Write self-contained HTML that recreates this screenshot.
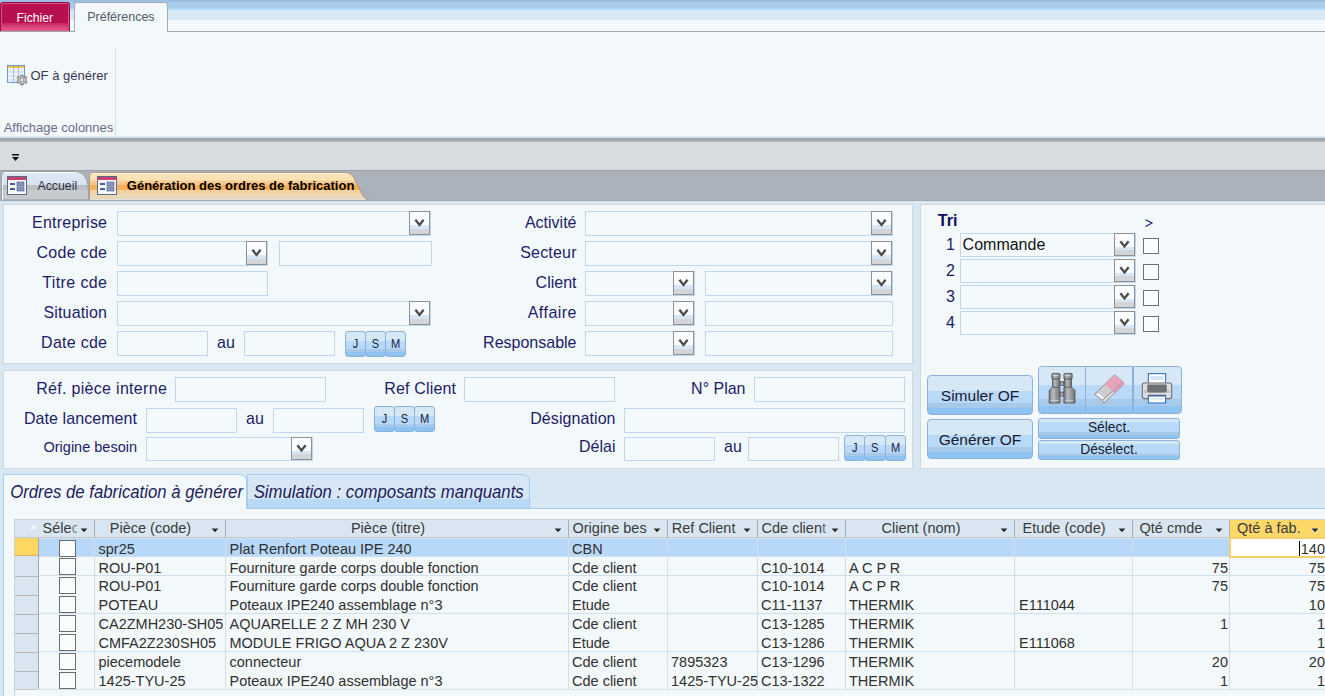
<!DOCTYPE html><html><head><meta charset="utf-8"><style>
*{margin:0;padding:0;box-sizing:content-box}
html,body{width:1325px;height:696px;overflow:hidden;background:#f3f8fb;font-family:"Liberation Sans", sans-serif}
body>div{position:absolute}
.t{position:absolute;white-space:nowrap}
.fld{position:absolute;border:1px solid #bfd8ef;background:#f4f9fc}
.dd{position:absolute;width:19px;border:1px solid #8e9094;background:linear-gradient(#fbfcfd 0,#fbfcfd 60%,#d6e6f4 60%,#d6e6f4 77%,#d3d5d8 77%)}
.btn{position:absolute;border:1px solid #8cb2dc;background:linear-gradient(#d6e7f5 0,#d6e7f5 40%,#b9d9f9 40%,#b9d9f9 70%,#a7c9ea 70%,#a7c9ea 85%,#8fc3f1 85%)}
.pnl{position:absolute;background:#f3f8fb;border:1px solid #d3d7db}
</style></head><body><div style="left:0px;top:0px;width:1325px;height:31px;background:linear-gradient(#9cc0e1 0,#9cc0e1 2px,#a8cce9 2px,#a8cce9 8px,#b4d8f8 8px,#b4d8f8 10px,#d8e8f4 10px,#d8e8f4 20px,#f3f8fb 20px)"></div>
<div style="left:0px;top:31px;width:1325px;height:1px;background:#a4a8ae"></div>
<div style="left:0;top:2px;width:68px;height:28px;background:linear-gradient(#b80f50 0,#b80f50 72%,#c82860 72%,#d84478 86%,#e25a8c 100%);border:1px solid #9c0c44;border-bottom:none;border-radius:3px 3px 0 0;box-shadow:inset 1px 1px 0 #d0507e,inset -1px 0 0 #d0507e"></div>
<div class="t" style="left:16.5px;top:10.76px;font-size:12.2px;line-height:14.02px;color:#ffffff;font-weight:normal;font-style:normal;">Fichier</div>
<div style="left:74px;top:2px;width:92px;height:29px;background:#f3f8fb;border:1px solid #a8acb2;border-bottom:none;border-radius:3px 3px 0 0"></div>
<div class="t" style="left:87.2px;top:10.49px;font-size:12.5px;line-height:14.36px;color:#505a66;font-weight:normal;font-style:normal;">Préférences</div>
<div style="left:0px;top:32px;width:1325px;height:105px;background:#f3f8fb"></div>
<div style="left:115px;top:48px;width:1px;height:89px;background:#d4dde6"></div>
<svg style="position:absolute;left:6px;top:64px" width="22" height="22">
<rect x="1.5" y="1.5" width="17" height="17" fill="#eef4fb" stroke="#6e9ccc"/>
<rect x="2" y="2" width="16" height="2" fill="#f0c040"/>
<line x1="7.5" y1="2" x2="7.5" y2="18" stroke="#9cb8d8"/><line x1="12.5" y1="2" x2="12.5" y2="18" stroke="#9cb8d8"/>
<line x1="2" y1="8" x2="18" y2="8" stroke="#c8d8ea"/><line x1="2" y1="12" x2="18" y2="12" stroke="#c8d8ea"/><line x1="2" y1="16" x2="18" y2="16" stroke="#c8d8ea"/>
<g transform="translate(16 16)"><path d="M-1 -4.8 L1 -4.8 L1.3 -3.3 L2.6 -2.7 L3.9 -3.6 L4.9 -2.2 L3.8 -1 L4 0.7 L5 1.8 L4 3.3 L2.7 2.8 L1.3 3.6 L1 4.9 L-1 4.9 L-1.3 3.6 L-2.7 2.8 L-4 3.3 L-5 1.8 L-4 0.7 L-3.8 -1 L-4.9 -2.2 L-3.9 -3.6 L-2.6 -2.7 L-1.3 -3.3 Z" fill="#c4c4c4" stroke="#6a6a6a" stroke-width="0.9"/><circle r="1.7" fill="#f6f6f6" stroke="#7a7a7a" stroke-width="0.7"/></g>
</svg>
<div class="t" style="left:30.5px;top:69.03px;font-size:13px;line-height:14.94px;color:#3a3658;font-weight:normal;font-style:normal;">OF à générer</div>
<div class="t" style="left:3.7px;top:121.23px;font-size:13px;line-height:14.94px;color:#6c6a8a;font-weight:normal;font-style:normal;">Affichage colonnes</div>
<div style="left:0px;top:136px;width:1325px;height:2px;background:#d4e4f2"></div>
<div style="left:0px;top:138px;width:1325px;height:4px;background:linear-gradient(#9ca0a6,#b4b8bc)"></div>
<div style="left:0px;top:142px;width:1325px;height:28px;background:#d8dbdf"></div>
<div style="left:0px;top:142px;width:1325px;height:1px;background:#d2deea"></div>
<svg style="position:absolute;left:11px;top:153px" width="10" height="10"><rect x="1" y="1" width="7" height="1.5" fill="#111"/><path d="M1 4 L8 4 L4.5 8 Z" fill="#111"/></svg>
<div style="left:0px;top:170px;width:1325px;height:1px;background:#9ca0a6"></div>
<div style="left:0px;top:171px;width:1325px;height:29px;background:#abb2bb"></div>
<svg style="position:absolute;left:0;top:170px" width="92" height="31">
<defs><linearGradient id="ag" x1="0" y1="0" x2="0" y2="1">
<stop offset="0" stop-color="#ffffff"/><stop offset="0.07" stop-color="#ffffff"/><stop offset="0.07" stop-color="#dce8f4"/><stop offset="0.48" stop-color="#d6e4f0"/><stop offset="0.48" stop-color="#bcc0c4"/><stop offset="0.64" stop-color="#bcc0c4"/><stop offset="0.64" stop-color="#c8cbcf"/><stop offset="1" stop-color="#c6c9cd"/></linearGradient></defs>
<path d="M1.5 30 L1.5 6 Q1.5 1.5 6 1.5 L75 1.5 Q86 2 88 15 L89 30 Z" fill="url(#ag)" stroke="#9aa0a6" stroke-width="1"/>
<path d="M2.5 30 L2.5 7" stroke="#f4f6f8" stroke-width="1"/>
</svg>
<svg style="position:absolute;left:88px;top:171px" width="285" height="30">
<defs><linearGradient id="og" x1="0" y1="0" x2="0" y2="1">
<stop offset="0" stop-color="#fffaf0"/><stop offset="0.07" stop-color="#fffaf0"/><stop offset="0.07" stop-color="#fbe4b8"/><stop offset="0.28" stop-color="#fbe0b2"/><stop offset="0.30" stop-color="#f8cc94"/><stop offset="0.44" stop-color="#f8c488"/><stop offset="0.46" stop-color="#f7b055"/><stop offset="0.62" stop-color="#f7b258"/><stop offset="0.64" stop-color="#f6d09c"/><stop offset="0.76" stop-color="#f2d4a8"/><stop offset="0.78" stop-color="#ecd8b4"/><stop offset="0.93" stop-color="#e8d8b8"/><stop offset="0.94" stop-color="#e0e2e2"/><stop offset="1" stop-color="#e0e2e2"/></linearGradient></defs>
<path d="M1.5 29.5 L1.5 5 Q1.5 1.5 5 1.5 L257 1.5 Q263 1.5 266 7 L274 23 Q277 29 283 29.5 Z" fill="url(#og)" stroke="#b09878" stroke-width="1"/>
</svg>
<svg style="position:absolute;left:7px;top:176px" width="20" height="19">
<rect x="0.5" y="0.5" width="19" height="18" fill="#f6f8fc" stroke="#5a6a8a"/>
<rect x="1" y="1" width="18" height="3" fill="#c84070"/>
<rect x="3" y="7" width="5" height="2" fill="#4a5a9a"/><rect x="3" y="12" width="5" height="2" fill="#4a5a9a"/>
<rect x="10" y="6" width="7" height="4" fill="#8898c0" stroke="#4a5a8a" stroke-width="0.6"/><rect x="10" y="11" width="7" height="4" fill="#8898c0" stroke="#4a5a8a" stroke-width="0.6"/>
</svg>
<div class="t" style="left:37.5px;top:179.37px;font-size:12.3px;line-height:14.13px;color:#303048;font-weight:normal;font-style:normal;">Accueil</div>
<svg style="position:absolute;left:97px;top:176px" width="20" height="19">
<rect x="0.5" y="0.5" width="19" height="18" fill="#f6f8fc" stroke="#5a6a8a"/>
<rect x="1" y="1" width="18" height="3" fill="#c84070"/>
<rect x="3" y="7" width="5" height="2" fill="#4a5a9a"/><rect x="3" y="12" width="5" height="2" fill="#4a5a9a"/>
<rect x="10" y="6" width="7" height="4" fill="#8898c0" stroke="#4a5a8a" stroke-width="0.6"/><rect x="10" y="11" width="7" height="4" fill="#8898c0" stroke="#4a5a8a" stroke-width="0.6"/>
</svg>
<div class="t" style="left:126.8px;top:178.74px;font-size:13px;line-height:14.94px;color:#000000;font-weight:bold;font-style:normal;">Génération des ordres de fabrication</div>
<div style="left:0px;top:200px;width:1325px;height:496px;background:#d7e7f4"></div>
<div style="left:0px;top:200px;width:1325px;height:1px;background:#a2a8ae"></div>
<div class="pnl" style="left:3px;top:204px;width:908px;height:158px"></div>
<div class="pnl" style="left:3px;top:370px;width:908px;height:97px"></div>
<div class="pnl" style="left:920px;top:204px;width:410px;height:263px"></div>
<div class="t" style="right:1217.7777777777778px;top:213.52px;font-size:16px;line-height:18.38px;color:#1c1c66;font-weight:normal;font-style:normal;letter-spacing:0.222px;transform:scaleY(1.05);transform-origin:0 14.74px;">Entreprise</div>
<div class="t" style="right:1217.7px;top:243.52px;font-size:16px;line-height:18.38px;color:#1c1c66;font-weight:normal;font-style:normal;letter-spacing:0.300px;transform:scaleY(1.05);transform-origin:0 14.74px;">Code cde</div>
<div class="t" style="right:1217.6125px;top:273.52px;font-size:16px;line-height:18.38px;color:#1c1c66;font-weight:normal;font-style:normal;letter-spacing:0.388px;transform:scaleY(1.05);transform-origin:0 14.74px;">Titre cde</div>
<div class="t" style="right:1217.8375px;top:303.52px;font-size:16px;line-height:18.38px;color:#1c1c66;font-weight:normal;font-style:normal;letter-spacing:0.163px;transform:scaleY(1.05);transform-origin:0 14.74px;">Situation</div>
<div class="t" style="right:1217.7285714285715px;top:333.52px;font-size:16px;line-height:18.38px;color:#1c1c66;font-weight:normal;font-style:normal;letter-spacing:0.271px;transform:scaleY(1.05);transform-origin:0 14.74px;">Date cde</div>
<div class="fld" style="left:117px;top:211px;width:312px;height:23px"></div>
<div class="dd" style="left:409px;top:211px;height:22px"><svg width="19" height="22" style="position:absolute;left:0;top:0"><path d="M5.4 7.8 L9.5 12.9 L13.6 7.8" fill="none" stroke="#4c4c4c" stroke-width="2.4" stroke-linejoin="miter"/></svg></div>
<div class="fld" style="left:117px;top:241px;width:149px;height:23px"></div>
<div class="dd" style="left:246px;top:241px;height:22px"><svg width="19" height="22" style="position:absolute;left:0;top:0"><path d="M5.4 7.8 L9.5 12.9 L13.6 7.8" fill="none" stroke="#4c4c4c" stroke-width="2.4" stroke-linejoin="miter"/></svg></div>
<div class="fld" style="left:279px;top:241px;width:151px;height:23px"></div>
<div class="fld" style="left:117px;top:271px;width:149px;height:23px"></div>
<div class="fld" style="left:117px;top:301px;width:312px;height:23px"></div>
<div class="dd" style="left:409px;top:301px;height:22px"><svg width="19" height="22" style="position:absolute;left:0;top:0"><path d="M5.4 7.8 L9.5 12.9 L13.6 7.8" fill="none" stroke="#4c4c4c" stroke-width="2.4" stroke-linejoin="miter"/></svg></div>
<div class="fld" style="left:117px;top:331px;width:89px;height:23px"></div>
<div class="t" style="left:217px;top:333.52px;font-size:16px;line-height:18.38px;color:#1c1c66;font-weight:normal;font-style:normal;transform:scaleY(1.05);transform-origin:0 14.74px;">au</div>
<div class="fld" style="left:244px;top:331px;width:89px;height:23px"></div>
<div class="btn" style="left:345px;top:331px;width:19px;height:24px;border-radius:3px;background:linear-gradient(#d6e7f5 0,#d6e7f5 36%,#b9d9f9 36%,#b9d9f9 70%,#a7c9ea 70%,#a7c9ea 84%,#8fc3f1 84%);"><span style="position:absolute;left:0;right:0;top:3.6px;text-align:center;font-size:13px;line-height:15px;color:#1c1c40;transform:scaleX(0.85)">J</span></div>
<div class="btn" style="left:365px;top:331px;width:19px;height:24px;border-radius:3px;background:linear-gradient(#d6e7f5 0,#d6e7f5 36%,#b9d9f9 36%,#b9d9f9 70%,#a7c9ea 70%,#a7c9ea 84%,#8fc3f1 84%);"><span style="position:absolute;left:0;right:0;top:3.6px;text-align:center;font-size:13px;line-height:15px;color:#1c1c40;transform:scaleX(0.85)">S</span></div>
<div class="btn" style="left:385px;top:331px;width:19px;height:24px;border-radius:3px;background:linear-gradient(#d6e7f5 0,#d6e7f5 36%,#b9d9f9 36%,#b9d9f9 70%,#a7c9ea 70%,#a7c9ea 84%,#8fc3f1 84%);"><span style="position:absolute;left:0;right:0;top:3.6px;text-align:center;font-size:13px;line-height:15px;color:#1c1c40;transform:scaleX(0.85)">M</span></div>
<div class="t" style="right:748.5px;top:213.52px;font-size:16px;line-height:18.38px;color:#1c1c66;font-weight:normal;font-style:normal;transform:scaleY(1.05);transform-origin:0 14.74px;">Activité</div>
<div class="t" style="right:748.3px;top:243.52px;font-size:16px;line-height:18.38px;color:#1c1c66;font-weight:normal;font-style:normal;letter-spacing:0.200px;transform:scaleY(1.05);transform-origin:0 14.74px;">Secteur</div>
<div class="t" style="right:748.5px;top:273.52px;font-size:16px;line-height:18.38px;color:#1c1c66;font-weight:normal;font-style:normal;transform:scaleY(1.05);transform-origin:0 14.74px;">Client</div>
<div class="t" style="right:748.0333333333333px;top:303.52px;font-size:16px;line-height:18.38px;color:#1c1c66;font-weight:normal;font-style:normal;letter-spacing:0.467px;transform:scaleY(1.05);transform-origin:0 14.74px;">Affaire</div>
<div class="t" style="right:748.5px;top:333.52px;font-size:16px;line-height:18.38px;color:#1c1c66;font-weight:normal;font-style:normal;transform:scaleY(1.05);transform-origin:0 14.74px;">Responsable</div>
<div class="fld" style="left:585px;top:211px;width:306px;height:23px"></div>
<div class="dd" style="left:871px;top:211px;height:22px"><svg width="19" height="22" style="position:absolute;left:0;top:0"><path d="M5.4 7.8 L9.5 12.9 L13.6 7.8" fill="none" stroke="#4c4c4c" stroke-width="2.4" stroke-linejoin="miter"/></svg></div>
<div class="fld" style="left:585px;top:241px;width:306px;height:23px"></div>
<div class="dd" style="left:871px;top:241px;height:22px"><svg width="19" height="22" style="position:absolute;left:0;top:0"><path d="M5.4 7.8 L9.5 12.9 L13.6 7.8" fill="none" stroke="#4c4c4c" stroke-width="2.4" stroke-linejoin="miter"/></svg></div>
<div class="fld" style="left:585px;top:271px;width:108px;height:23px"></div>
<div class="dd" style="left:673px;top:271px;height:22px"><svg width="19" height="22" style="position:absolute;left:0;top:0"><path d="M5.4 7.8 L9.5 12.9 L13.6 7.8" fill="none" stroke="#4c4c4c" stroke-width="2.4" stroke-linejoin="miter"/></svg></div>
<div class="fld" style="left:705px;top:271px;width:186px;height:23px"></div>
<div class="dd" style="left:871px;top:271px;height:22px"><svg width="19" height="22" style="position:absolute;left:0;top:0"><path d="M5.4 7.8 L9.5 12.9 L13.6 7.8" fill="none" stroke="#4c4c4c" stroke-width="2.4" stroke-linejoin="miter"/></svg></div>
<div class="fld" style="left:585px;top:301px;width:108px;height:23px"></div>
<div class="dd" style="left:673px;top:301px;height:22px"><svg width="19" height="22" style="position:absolute;left:0;top:0"><path d="M5.4 7.8 L9.5 12.9 L13.6 7.8" fill="none" stroke="#4c4c4c" stroke-width="2.4" stroke-linejoin="miter"/></svg></div>
<div class="fld" style="left:705px;top:301px;width:186px;height:23px"></div>
<div class="fld" style="left:585px;top:331px;width:108px;height:23px"></div>
<div class="dd" style="left:673px;top:331px;height:22px"><svg width="19" height="22" style="position:absolute;left:0;top:0"><path d="M5.4 7.8 L9.5 12.9 L13.6 7.8" fill="none" stroke="#4c4c4c" stroke-width="2.4" stroke-linejoin="miter"/></svg></div>
<div class="fld" style="left:705px;top:331px;width:186px;height:23px"></div>
<div class="t" style="right:1157.8899999999999px;top:380.22px;font-size:16px;line-height:18.38px;color:#1c1c66;font-weight:normal;font-style:normal;letter-spacing:0.310px;transform:scaleY(1.05);transform-origin:0 14.74px;">Réf. pièce interne</div>
<div class="fld" style="left:175px;top:377px;width:149px;height:23px"></div>
<div class="t" style="right:1187.923076923077px;top:409.92px;font-size:16px;line-height:18.38px;color:#1c1c66;font-weight:normal;font-style:normal;letter-spacing:0.077px;transform:scaleY(1.05);transform-origin:0 14.74px;">Date lancement</div>
<div class="fld" style="left:146px;top:408px;width:89px;height:23px"></div>
<div class="t" style="left:246px;top:409.92px;font-size:16px;line-height:18.38px;color:#1c1c66;font-weight:normal;font-style:normal;transform:scaleY(1.05);transform-origin:0 14.74px;">au</div>
<div class="fld" style="left:273px;top:408px;width:89px;height:23px"></div>
<div class="btn" style="left:374px;top:406px;width:19px;height:24px;border-radius:3px;background:linear-gradient(#d6e7f5 0,#d6e7f5 36%,#b9d9f9 36%,#b9d9f9 70%,#a7c9ea 70%,#a7c9ea 84%,#8fc3f1 84%);"><span style="position:absolute;left:0;right:0;top:3.6px;text-align:center;font-size:13px;line-height:15px;color:#1c1c40;transform:scaleX(0.85)">J</span></div>
<div class="btn" style="left:394px;top:406px;width:19px;height:24px;border-radius:3px;background:linear-gradient(#d6e7f5 0,#d6e7f5 36%,#b9d9f9 36%,#b9d9f9 70%,#a7c9ea 70%,#a7c9ea 84%,#8fc3f1 84%);"><span style="position:absolute;left:0;right:0;top:3.6px;text-align:center;font-size:13px;line-height:15px;color:#1c1c40;transform:scaleX(0.85)">S</span></div>
<div class="btn" style="left:414px;top:406px;width:19px;height:24px;border-radius:3px;background:linear-gradient(#d6e7f5 0,#d6e7f5 36%,#b9d9f9 36%,#b9d9f9 70%,#a7c9ea 70%,#a7c9ea 84%,#8fc3f1 84%);"><span style="position:absolute;left:0;right:0;top:3.6px;text-align:center;font-size:13px;line-height:15px;color:#1c1c40;transform:scaleX(0.85)">M</span></div>
<div class="t" style="right:1188px;top:439.48px;font-size:14.5px;line-height:16.66px;color:#1c1c66;font-weight:normal;font-style:normal;">Origine besoin</div>
<div class="fld" style="left:146px;top:437px;width:165px;height:22px"></div>
<div class="dd" style="left:291px;top:437px;height:21px"><svg width="19" height="21" style="position:absolute;left:0;top:0"><path d="M5.4 7.3 L9.5 12.4 L13.6 7.3" fill="none" stroke="#4c4c4c" stroke-width="2.4" stroke-linejoin="miter"/></svg></div>
<div class="t" style="right:868.8222222222222px;top:380.22px;font-size:16px;line-height:18.38px;color:#1c1c66;font-weight:normal;font-style:normal;letter-spacing:0.178px;transform:scaleY(1.05);transform-origin:0 14.74px;">Ref Client</div>
<div class="fld" style="left:464px;top:377px;width:149px;height:23px"></div>
<div class="t" style="right:579.5px;top:380.22px;font-size:16px;line-height:18.38px;color:#1c1c66;font-weight:normal;font-style:normal;transform:scaleY(1.05);transform-origin:0 14.74px;">N° Plan</div>
<div class="fld" style="left:754px;top:377px;width:149px;height:23px"></div>
<div class="t" style="right:709.42px;top:409.92px;font-size:16px;line-height:18.38px;color:#1c1c66;font-weight:normal;font-style:normal;letter-spacing:0.080px;transform:scaleY(1.05);transform-origin:0 14.74px;">Désignation</div>
<div class="fld" style="left:624px;top:408px;width:279px;height:23px"></div>
<div class="t" style="right:709.5px;top:438.12px;font-size:16px;line-height:18.38px;color:#1c1c66;font-weight:normal;font-style:normal;transform:scaleY(1.05);transform-origin:0 14.74px;">Délai</div>
<div class="fld" style="left:624px;top:437px;width:89px;height:22px"></div>
<div class="t" style="left:724px;top:438.12px;font-size:16px;line-height:18.38px;color:#1c1c66;font-weight:normal;font-style:normal;transform:scaleY(1.05);transform-origin:0 14.74px;">au</div>
<div class="fld" style="left:748px;top:437px;width:89px;height:22px"></div>
<div class="btn" style="left:844.0px;top:435px;width:19.3px;height:24px;border-radius:3px;background:linear-gradient(#d6e7f5 0,#d6e7f5 36%,#b9d9f9 36%,#b9d9f9 70%,#a7c9ea 70%,#a7c9ea 84%,#8fc3f1 84%);"><span style="position:absolute;left:0;right:0;top:3.6px;text-align:center;font-size:13px;line-height:15px;color:#1c1c40;transform:scaleX(0.85)">J</span></div>
<div class="btn" style="left:864.3px;top:435px;width:19.3px;height:24px;border-radius:3px;background:linear-gradient(#d6e7f5 0,#d6e7f5 36%,#b9d9f9 36%,#b9d9f9 70%,#a7c9ea 70%,#a7c9ea 84%,#8fc3f1 84%);"><span style="position:absolute;left:0;right:0;top:3.6px;text-align:center;font-size:13px;line-height:15px;color:#1c1c40;transform:scaleX(0.85)">S</span></div>
<div class="btn" style="left:884.6px;top:435px;width:19.3px;height:24px;border-radius:3px;background:linear-gradient(#d6e7f5 0,#d6e7f5 36%,#b9d9f9 36%,#b9d9f9 70%,#a7c9ea 70%,#a7c9ea 84%,#8fc3f1 84%);"><span style="position:absolute;left:0;right:0;top:3.6px;text-align:center;font-size:13px;line-height:15px;color:#1c1c40;transform:scaleX(0.85)">M</span></div>
<div class="t" style="left:937.8px;top:211.82px;font-size:16px;line-height:18.38px;color:#0c0c60;font-weight:bold;font-style:normal;">Tri</div>
<svg style="position:absolute;left:1144px;top:218px" width="10" height="10"><path d="M1.5 1.8 L8 5.1 L1.5 8.4" fill="none" stroke="#1c1c80" stroke-width="1.1"/></svg>
<div class="t" style="right:370px;top:235.52px;font-size:16px;line-height:18.38px;color:#1c1c66;font-weight:normal;font-style:normal;transform:scaleY(1.05);transform-origin:0 14.74px;">1</div>
<div class="fld" style="left:960px;top:233px;width:174px;height:22px"><span style="position:absolute;left:1.6px;top:1.8px;font-size:16px;color:#141414;white-space:nowrap">Commande</span></div>
<div class="dd" style="left:1114px;top:233px;height:21px"><svg width="19" height="21" style="position:absolute;left:0;top:0"><path d="M5.4 7.3 L9.5 12.4 L13.6 7.3" fill="none" stroke="#4c4c4c" stroke-width="2.4" stroke-linejoin="miter"/></svg></div>
<div style="left:1143px;top:238px;width:14px;height:14px;border:1px solid #707070;background:#fbfcfd"></div>
<div class="t" style="right:370px;top:261.52px;font-size:16px;line-height:18.38px;color:#1c1c66;font-weight:normal;font-style:normal;transform:scaleY(1.05);transform-origin:0 14.74px;">2</div>
<div class="fld" style="left:960px;top:259px;width:174px;height:22px"></div>
<div class="dd" style="left:1114px;top:259px;height:21px"><svg width="19" height="21" style="position:absolute;left:0;top:0"><path d="M5.4 7.3 L9.5 12.4 L13.6 7.3" fill="none" stroke="#4c4c4c" stroke-width="2.4" stroke-linejoin="miter"/></svg></div>
<div style="left:1143px;top:264px;width:14px;height:14px;border:1px solid #707070;background:#fbfcfd"></div>
<div class="t" style="right:370px;top:287.52px;font-size:16px;line-height:18.38px;color:#1c1c66;font-weight:normal;font-style:normal;transform:scaleY(1.05);transform-origin:0 14.74px;">3</div>
<div class="fld" style="left:960px;top:285px;width:174px;height:22px"></div>
<div class="dd" style="left:1114px;top:285px;height:21px"><svg width="19" height="21" style="position:absolute;left:0;top:0"><path d="M5.4 7.3 L9.5 12.4 L13.6 7.3" fill="none" stroke="#4c4c4c" stroke-width="2.4" stroke-linejoin="miter"/></svg></div>
<div style="left:1143px;top:290px;width:14px;height:14px;border:1px solid #707070;background:#fbfcfd"></div>
<div class="t" style="right:370px;top:313.52px;font-size:16px;line-height:18.38px;color:#1c1c66;font-weight:normal;font-style:normal;transform:scaleY(1.05);transform-origin:0 14.74px;">4</div>
<div class="fld" style="left:960px;top:311px;width:174px;height:22px"></div>
<div class="dd" style="left:1114px;top:311px;height:21px"><svg width="19" height="21" style="position:absolute;left:0;top:0"><path d="M5.4 7.3 L9.5 12.4 L13.6 7.3" fill="none" stroke="#4c4c4c" stroke-width="2.4" stroke-linejoin="miter"/></svg></div>
<div style="left:1143px;top:316px;width:14px;height:14px;border:1px solid #707070;background:#fbfcfd"></div>
<div class="btn" style="left:927px;top:375px;width:104px;height:38px;border-radius:4px"><span style="position:absolute;left:0;right:0;top:10.7px;text-align:center;font-size:15.5px;color:#1a1a30">Simuler OF</span></div>
<div class="btn" style="left:927px;top:419px;width:104px;height:38px;border-radius:4px"><span style="position:absolute;left:0;right:0;top:10.7px;text-align:center;font-size:15.5px;color:#1a1a30">Générer OF</span></div>
<div class="btn" style="left:1038px;top:366px;width:46px;height:46px;border-radius:4px 0 0 4px"></div>
<div class="btn" style="left:1085px;top:366px;width:46px;height:46px"></div>
<div class="btn" style="left:1133px;top:366px;width:47px;height:46px;border-radius:0 4px 4px 0"></div>
<div class="btn" style="left:1038px;top:418px;width:140px;height:19px;border-radius:3px;background:linear-gradient(#d6e7f5 0,#d6e7f5 18%,#b9d9f9 18%,#b9d9f9 70%,#a7c9ea 70%,#a7c9ea 84%,#8fc3f1 84%)"><span style="position:absolute;left:0;right:0;top:1.2px;text-align:center;font-size:13.8px;color:#1a1a30">Sélect.</span></div>
<div class="btn" style="left:1038px;top:440px;width:140px;height:18px;border-radius:3px;background:linear-gradient(#d6e7f5 0,#d6e7f5 18%,#b9d9f9 18%,#b9d9f9 70%,#a7c9ea 70%,#a7c9ea 84%,#8fc3f1 84%)"><span style="position:absolute;left:0;right:0;top:0.6px;text-align:center;font-size:13.8px;color:#1a1a30">Désélect.</span></div>
<svg style="position:absolute;left:1044px;top:370px" width="36" height="36">
<defs><linearGradient id="bg1" x1="0" y1="0" x2="1" y2="0"><stop offset="0" stop-color="#727478"/><stop offset="0.35" stop-color="#babcc0"/><stop offset="0.6" stop-color="#9c9ea2"/><stop offset="1" stop-color="#6e7074"/></linearGradient></defs>
<g fill="url(#bg1)" stroke="#5a5c60" stroke-width="0.9" stroke-linejoin="round">
<rect x="16" y="11.6" width="4" height="3.9"/><rect x="16" y="22.2" width="4" height="3.9"/>
<rect x="7.8" y="3.4" width="8.2" height="5.6" rx="1"/><rect x="19.9" y="3.4" width="8.3" height="5.6" rx="1"/>
<rect x="8.5" y="9" width="7" height="8.5"/><rect x="20.5" y="9" width="7" height="8.5"/>
<path d="M5.2 20.5 L8.2 17.3 L15.9 17.3 L15.9 33.1 L5.2 33.1 Z"/>
<path d="M19.9 17.3 L27.8 17.3 L31 20.5 L31 33.1 L19.9 33.1 Z"/>
</g>
<g fill="#c8cacc"><rect x="8.5" y="5" width="6" height="1"/><rect x="20.5" y="5" width="6" height="1"/><rect x="6.5" y="30" width="8" height="1"/><rect x="21" y="30" width="8" height="1"/></g>
</svg>
<svg style="position:absolute;left:1090px;top:370px" width="38" height="36">
<path d="M32.5 11.5 L33.8 14.2 L13.8 33.2 L12.5 30.5 Z" fill="#e4e4e6" stroke="#909094" stroke-width="1" stroke-linejoin="round"/>
<path d="M32.5 11.5 L33.8 14.2 L23.8 23.7 L22.5 21 Z" fill="#e29ab4"/>
<path d="M24.5 4.8 L32.5 11.5 L12.5 30.5 L4.5 24.3 Z" fill="#cdcdcf" stroke="#909094" stroke-width="1" stroke-linejoin="round"/>
<path d="M24.5 4.8 L32.5 11.5 L22.5 21 L14.5 14.5 Z" fill="#e8a4bc"/>
<path d="M6 24.5 L12.5 29.5 L14 28 L8 23 Z" fill="#f4f6f8"/>
</svg>
<svg style="position:absolute;left:1138px;top:370px" width="38" height="36">
<rect x="10.4" y="3.6" width="17.2" height="11" fill="#fbfdff" stroke="#3a74c0" stroke-width="1.1"/>
<rect x="12.5" y="6" width="13" height="4" fill="#d4e6f6"/>
<rect x="4.3" y="13" width="29.4" height="15.6" rx="2" fill="#dcdcde" stroke="#6e7074" stroke-width="1.1"/>
<rect x="6" y="20" width="26" height="3" fill="#c4c4c6"/>
<path d="M9.3 14.5 L28.7 14.5 L28.7 20.5 Q28.7 22.5 26.7 22.5 L11.3 22.5 Q9.3 22.5 9.3 20.5 Z" fill="#6c7074"/>
<rect x="10" y="24.8" width="18" height="1.2" fill="#505256"/>
<rect x="10.4" y="26" width="17.2" height="7" fill="#fbfdff" stroke="#3a74c0" stroke-width="1.1"/>
<rect x="12.5" y="28" width="13" height="1.5" fill="#d4e6f6"/>
</svg>
<div style="left:3px;top:474px;width:242px;height:40px;background:#f3f8fb;border:1px solid #a9cdf0;border-bottom:none;border-radius:0 7px 0 0"></div>
<div style="left:247px;top:474px;width:281px;height:33px;background:linear-gradient(#d6e6f4 0,#d6e6f4 74%,#b9d9f8 74%);border:1px solid #a9cdf0;border-radius:0 7px 0 0"></div>
<div style="left:3px;top:508px;width:1330px;height:200px;background:#f3f8fb;border-left:1px solid #a9cdf0;border-top:1px solid #a9cdf0"></div>
<div style="left:4px;top:508px;width:242px;height:2px;background:#f3f8fb"></div>
<div class="t" style="left:10.2px;top:483.04px;font-size:16.75px;line-height:19.25px;color:#1c1c5a;font-weight:normal;font-style:italic;transform:scaleY(1.05);transform-origin:0 15.4px">Ordres de fabrication à générer</div>
<div class="t" style="left:253.7px;top:483.04px;font-size:16.75px;line-height:19.25px;color:#1c1c5a;font-weight:normal;font-style:italic;transform:scaleY(1.05);transform-origin:0 15.4px">Simulation : composants manquants</div>
<div style="left:14px;top:519px;width:1311px;height:1px;background:#cdd1d5"></div>
<div style="left:14px;top:519px;width:1px;height:19px;background:#cdd1d5"></div>
<div style="left:15px;top:520px;width:1310px;height:17px;background:#d9e6f2"></div>
<div style="left:14px;top:537px;width:1311px;height:1px;background:#c6cacf"></div>
<div style="left:1229px;top:520px;width:96px;height:17px;background:#fcd76a"></div>
<div style="left:94px;top:520px;width:1px;height:18px;background:#a9aeb5"></div>
<div style="left:225px;top:520px;width:1px;height:18px;background:#a9aeb5"></div>
<div style="left:568px;top:520px;width:1px;height:18px;background:#a9aeb5"></div>
<div style="left:667px;top:520px;width:1px;height:18px;background:#a9aeb5"></div>
<div style="left:757px;top:520px;width:1px;height:18px;background:#a9aeb5"></div>
<div style="left:845px;top:520px;width:1px;height:18px;background:#a9aeb5"></div>
<div style="left:1014px;top:520px;width:1px;height:18px;background:#a9aeb5"></div>
<div style="left:1132px;top:520px;width:1px;height:18px;background:#a9aeb5"></div>
<div style="left:1229px;top:520px;width:1px;height:18px;background:#a9aeb5"></div>
<div style="left:14px;top:538px;width:24px;height:151px;background:#d9e6f2"></div>
<div style="left:14px;top:538px;width:24px;height:18px;background:#fcd862"></div>
<div style="left:14px;top:555px;width:24px;height:1px;background:#e0b060"></div>
<div style="left:14px;top:576px;width:24px;height:1px;background:#b4b6b9"></div>
<div style="left:14px;top:595px;width:24px;height:1px;background:#b4b6b9"></div>
<div style="left:14px;top:614px;width:24px;height:1px;background:#b4b6b9"></div>
<div style="left:14px;top:633px;width:24px;height:1px;background:#b4b6b9"></div>
<div style="left:14px;top:652px;width:24px;height:1px;background:#b4b6b9"></div>
<div style="left:14px;top:671px;width:24px;height:1px;background:#b4b6b9"></div>
<div style="left:14px;top:689px;width:24px;height:1px;background:#c4c6c9"></div>
<div style="left:14px;top:538px;width:1px;height:158px;background:#cdd1d5"></div>
<div style="left:38px;top:538px;width:1px;height:151px;background:#a6aaae"></div>
<div style="left:39px;top:538px;width:1190px;height:18px;background:#b7d8f8"></div>
<div style="left:39px;top:538px;width:1286px;height:1px;background:#d0e0ee"></div>
<div style="left:39px;top:556px;width:1286px;height:1px;background:#d0e0ee"></div>
<div style="left:39px;top:575px;width:1286px;height:1px;background:#d0e0ee"></div>
<div style="left:39px;top:613px;width:1286px;height:1px;background:#d0e0ee"></div>
<div style="left:39px;top:651px;width:1286px;height:1px;background:#d0e0ee"></div>
<div style="left:39px;top:689px;width:1286px;height:1px;background:#d0e0ee"></div>
<div style="left:94px;top:538px;width:1px;height:151px;background:#d3dde6"></div>
<div style="left:225px;top:538px;width:1px;height:151px;background:#d3dde6"></div>
<div style="left:568px;top:538px;width:1px;height:151px;background:#d3dde6"></div>
<div style="left:667px;top:538px;width:1px;height:151px;background:#d3dde6"></div>
<div style="left:757px;top:538px;width:1px;height:151px;background:#d3dde6"></div>
<div style="left:845px;top:538px;width:1px;height:151px;background:#d3dde6"></div>
<div style="left:1014px;top:538px;width:1px;height:151px;background:#d3dde6"></div>
<div style="left:1132px;top:538px;width:1px;height:151px;background:#d3dde6"></div>
<div style="left:1229px;top:538px;width:1px;height:151px;background:#d3dde6"></div>
<div style="left:1229px;top:537px;width:94px;height:17px;background:#ffffff;border:2px solid #f6cf6c;border-right:none"></div>
<div style="left:1299px;top:541px;width:1px;height:15px;background:#000"></div>
<div class="t" style="left:42.6px;top:520.38px;font-size:14.5px;line-height:16.66px;color:#3a3a3a;font-weight:normal;font-style:normal;width:34px;overflow:hidden;transform:scaleY(1.06);transform-origin:0 13.3px;">Séle<span style="opacity:.6">c</span></div>
<svg style="position:absolute;left:79px;top:528px" width="10" height="6"><path d="M0.5 0.5 L9.5 0.5 L5 5 Z" fill="#f3f8fb" opacity="0.9"/><path d="M1.5 0.5 L8.5 0.5 L5 4.2 Z" fill="#2a2a2a"/></svg>
<div class="t" style="left:-149.5px;width:600px;text-align:center;top:520.38px;font-size:14.5px;line-height:16.66px;color:#3a3a3a;font-weight:normal;font-style:normal;transform:scaleY(1.06);transform-origin:0 13.3px;">Pièce (code)</div>
<svg style="position:absolute;left:210px;top:528px" width="10" height="6"><path d="M0.5 0.5 L9.5 0.5 L5 5 Z" fill="#f3f8fb" opacity="0.9"/><path d="M1.5 0.5 L8.5 0.5 L5 4.2 Z" fill="#2a2a2a"/></svg>
<div class="t" style="left:88px;width:600px;text-align:center;top:520.38px;font-size:14.5px;line-height:16.66px;color:#3a3a3a;font-weight:normal;font-style:normal;transform:scaleY(1.06);transform-origin:0 13.3px;">Pièce (titre)</div>
<svg style="position:absolute;left:553px;top:528px" width="10" height="6"><path d="M0.5 0.5 L9.5 0.5 L5 5 Z" fill="#f3f8fb" opacity="0.9"/><path d="M1.5 0.5 L8.5 0.5 L5 4.2 Z" fill="#2a2a2a"/></svg>
<div class="t" style="left:572.5px;top:520.38px;font-size:14.5px;line-height:16.66px;color:#3a3a3a;font-weight:normal;font-style:normal;transform:scaleY(1.06);transform-origin:0 13.3px;">Origine bes</div>
<svg style="position:absolute;left:652px;top:528px" width="10" height="6"><path d="M0.5 0.5 L9.5 0.5 L5 5 Z" fill="#f3f8fb" opacity="0.9"/><path d="M1.5 0.5 L8.5 0.5 L5 4.2 Z" fill="#2a2a2a"/></svg>
<div class="t" style="left:671.8px;top:520.38px;font-size:14.5px;line-height:16.66px;color:#3a3a3a;font-weight:normal;font-style:normal;transform:scaleY(1.06);transform-origin:0 13.3px;">Ref Client</div>
<svg style="position:absolute;left:742px;top:528px" width="10" height="6"><path d="M0.5 0.5 L9.5 0.5 L5 5 Z" fill="#f3f8fb" opacity="0.9"/><path d="M1.5 0.5 L8.5 0.5 L5 4.2 Z" fill="#2a2a2a"/></svg>
<div class="t" style="left:761.5px;top:520.38px;font-size:14.5px;line-height:16.66px;color:#3a3a3a;font-weight:normal;font-style:normal;transform:scaleY(1.06);transform-origin:0 13.3px;">Cde clien<span style="opacity:.7">t</span></div>
<svg style="position:absolute;left:830px;top:528px" width="10" height="6"><path d="M0.5 0.5 L9.5 0.5 L5 5 Z" fill="#f3f8fb" opacity="0.9"/><path d="M1.5 0.5 L8.5 0.5 L5 4.2 Z" fill="#2a2a2a"/></svg>
<div class="t" style="left:621px;width:600px;text-align:center;top:520.38px;font-size:14.5px;line-height:16.66px;color:#3a3a3a;font-weight:normal;font-style:normal;transform:scaleY(1.06);transform-origin:0 13.3px;">Client (nom)</div>
<svg style="position:absolute;left:999px;top:528px" width="10" height="6"><path d="M0.5 0.5 L9.5 0.5 L5 5 Z" fill="#f3f8fb" opacity="0.9"/><path d="M1.5 0.5 L8.5 0.5 L5 4.2 Z" fill="#2a2a2a"/></svg>
<div class="t" style="left:1022.5px;top:520.38px;font-size:14.5px;line-height:16.66px;color:#3a3a3a;font-weight:normal;font-style:normal;transform:scaleY(1.06);transform-origin:0 13.3px;">Etude (code)</div>
<svg style="position:absolute;left:1117px;top:528px" width="10" height="6"><path d="M0.5 0.5 L9.5 0.5 L5 5 Z" fill="#f3f8fb" opacity="0.9"/><path d="M1.5 0.5 L8.5 0.5 L5 4.2 Z" fill="#2a2a2a"/></svg>
<div class="t" style="left:1139.5px;top:520.38px;font-size:14.5px;line-height:16.66px;color:#3a3a3a;font-weight:normal;font-style:normal;transform:scaleY(1.06);transform-origin:0 13.3px;">Qté cmde</div>
<svg style="position:absolute;left:1214px;top:528px" width="10" height="6"><path d="M0.5 0.5 L9.5 0.5 L5 5 Z" fill="#f3f8fb" opacity="0.9"/><path d="M1.5 0.5 L8.5 0.5 L5 4.2 Z" fill="#2a2a2a"/></svg>
<div class="t" style="left:1237px;top:520.38px;font-size:14.5px;line-height:16.66px;color:#3a3a3a;font-weight:normal;font-style:normal;transform:scaleY(1.06);transform-origin:0 13.3px;">Qté à fab.</div>
<svg style="position:absolute;left:1310px;top:528px" width="10" height="6"><path d="M0.5 0.5 L9.5 0.5 L5 5 Z" fill="#f3f8fb" opacity="0.9"/><path d="M1.5 0.5 L8.5 0.5 L5 4.2 Z" fill="#2a2a2a"/></svg>
<svg style="position:absolute;left:30px;top:524px" width="6" height="6"><path d="M5 0.5 L5 5 L0.5 5 Z" fill="#f8fbff"/></svg>
<div style="left:59px;top:539.5px;width:15px;height:15px;border:1px solid #6c6c6c;background:#fbfcfd"></div>
<div class="t" style="left:98.5px;top:540.58px;font-size:14.5px;line-height:16.66px;color:#303030;font-weight:normal;font-style:normal;transform:scaleY(1.06);transform-origin:0 13.3px;">spr25</div>
<div class="t" style="left:229.5px;top:540.58px;font-size:14.5px;line-height:16.66px;color:#303030;font-weight:normal;font-style:normal;transform:scaleY(1.06);transform-origin:0 13.3px;">Plat Renfort Poteau IPE 240</div>
<div class="t" style="left:572px;top:540.58px;font-size:14.5px;line-height:16.66px;color:#303030;font-weight:normal;font-style:normal;transform:scaleY(1.06);transform-origin:0 13.3px;">CBN</div>
<div class="t" style="right:0px;top:540.58px;font-size:14.5px;line-height:16.66px;color:#303030;font-weight:normal;font-style:normal;transform:scaleY(1.06);transform-origin:0 13.3px;">140</div>
<div style="left:59px;top:558.4px;width:15px;height:15px;border:1px solid #6c6c6c;background:#fbfcfd"></div>
<div class="t" style="left:98.5px;top:559.51px;font-size:14.5px;line-height:16.66px;color:#303030;font-weight:normal;font-style:normal;transform:scaleY(1.06);transform-origin:0 13.3px;">ROU-P01</div>
<div class="t" style="left:229.5px;top:559.51px;font-size:14.5px;line-height:16.66px;color:#303030;font-weight:normal;font-style:normal;transform:scaleY(1.06);transform-origin:0 13.3px;">Fourniture garde corps double fonction</div>
<div class="t" style="left:572px;top:559.51px;font-size:14.5px;line-height:16.66px;color:#303030;font-weight:normal;font-style:normal;transform:scaleY(1.06);transform-origin:0 13.3px;">Cde client</div>
<div class="t" style="left:761px;top:559.51px;font-size:14.5px;line-height:16.66px;color:#303030;font-weight:normal;font-style:normal;transform:scaleY(1.06);transform-origin:0 13.3px;">C10-1014</div>
<div class="t" style="left:849px;top:559.51px;font-size:14.5px;line-height:16.66px;color:#303030;font-weight:normal;font-style:normal;transform:scaleY(1.06);transform-origin:0 13.3px;">A C P R</div>
<div class="t" style="right:97px;top:559.51px;font-size:14.5px;line-height:16.66px;color:#303030;font-weight:normal;font-style:normal;transform:scaleY(1.06);transform-origin:0 13.3px;">75</div>
<div class="t" style="right:0px;top:559.51px;font-size:14.5px;line-height:16.66px;color:#303030;font-weight:normal;font-style:normal;transform:scaleY(1.06);transform-origin:0 13.3px;">75</div>
<div style="left:59px;top:577.4px;width:15px;height:15px;border:1px solid #6c6c6c;background:#fbfcfd"></div>
<div class="t" style="left:98.5px;top:578.44px;font-size:14.5px;line-height:16.66px;color:#303030;font-weight:normal;font-style:normal;transform:scaleY(1.06);transform-origin:0 13.3px;">ROU-P01</div>
<div class="t" style="left:229.5px;top:578.44px;font-size:14.5px;line-height:16.66px;color:#303030;font-weight:normal;font-style:normal;transform:scaleY(1.06);transform-origin:0 13.3px;">Fourniture garde corps double fonction</div>
<div class="t" style="left:572px;top:578.44px;font-size:14.5px;line-height:16.66px;color:#303030;font-weight:normal;font-style:normal;transform:scaleY(1.06);transform-origin:0 13.3px;">Cde client</div>
<div class="t" style="left:761px;top:578.44px;font-size:14.5px;line-height:16.66px;color:#303030;font-weight:normal;font-style:normal;transform:scaleY(1.06);transform-origin:0 13.3px;">C10-1014</div>
<div class="t" style="left:849px;top:578.44px;font-size:14.5px;line-height:16.66px;color:#303030;font-weight:normal;font-style:normal;transform:scaleY(1.06);transform-origin:0 13.3px;">A C P R</div>
<div class="t" style="right:97px;top:578.44px;font-size:14.5px;line-height:16.66px;color:#303030;font-weight:normal;font-style:normal;transform:scaleY(1.06);transform-origin:0 13.3px;">75</div>
<div class="t" style="right:0px;top:578.44px;font-size:14.5px;line-height:16.66px;color:#303030;font-weight:normal;font-style:normal;transform:scaleY(1.06);transform-origin:0 13.3px;">75</div>
<div style="left:59px;top:596.3px;width:15px;height:15px;border:1px solid #6c6c6c;background:#fbfcfd"></div>
<div class="t" style="left:98.5px;top:597.37px;font-size:14.5px;line-height:16.66px;color:#303030;font-weight:normal;font-style:normal;transform:scaleY(1.06);transform-origin:0 13.3px;">POTEAU</div>
<div class="t" style="left:229.5px;top:597.37px;font-size:14.5px;line-height:16.66px;color:#303030;font-weight:normal;font-style:normal;transform:scaleY(1.06);transform-origin:0 13.3px;">Poteaux IPE240 assemblage n°3</div>
<div class="t" style="left:572px;top:597.37px;font-size:14.5px;line-height:16.66px;color:#303030;font-weight:normal;font-style:normal;transform:scaleY(1.06);transform-origin:0 13.3px;">Etude</div>
<div class="t" style="left:761px;top:597.37px;font-size:14.5px;line-height:16.66px;color:#303030;font-weight:normal;font-style:normal;transform:scaleY(1.06);transform-origin:0 13.3px;">C11-1137</div>
<div class="t" style="left:849px;top:597.37px;font-size:14.5px;line-height:16.66px;color:#303030;font-weight:normal;font-style:normal;transform:scaleY(1.06);transform-origin:0 13.3px;">THERMIK</div>
<div class="t" style="left:1019px;top:597.37px;font-size:14.5px;line-height:16.66px;color:#303030;font-weight:normal;font-style:normal;transform:scaleY(1.06);transform-origin:0 13.3px;">E111044</div>
<div class="t" style="right:0px;top:597.37px;font-size:14.5px;line-height:16.66px;color:#303030;font-weight:normal;font-style:normal;transform:scaleY(1.06);transform-origin:0 13.3px;">10</div>
<div style="left:59px;top:615.2px;width:15px;height:15px;border:1px solid #6c6c6c;background:#fbfcfd"></div>
<div class="t" style="left:98.5px;top:616.30px;font-size:14.5px;line-height:16.66px;color:#303030;font-weight:normal;font-style:normal;transform:scaleY(1.06);transform-origin:0 13.3px;">CA2ZMH230-SH05</div>
<div class="t" style="left:229.5px;top:616.30px;font-size:14.5px;line-height:16.66px;color:#303030;font-weight:normal;font-style:normal;transform:scaleY(1.06);transform-origin:0 13.3px;">AQUARELLE 2 Z MH 230 V</div>
<div class="t" style="left:572px;top:616.30px;font-size:14.5px;line-height:16.66px;color:#303030;font-weight:normal;font-style:normal;transform:scaleY(1.06);transform-origin:0 13.3px;">Cde client</div>
<div class="t" style="left:761px;top:616.30px;font-size:14.5px;line-height:16.66px;color:#303030;font-weight:normal;font-style:normal;transform:scaleY(1.06);transform-origin:0 13.3px;">C13-1285</div>
<div class="t" style="left:849px;top:616.30px;font-size:14.5px;line-height:16.66px;color:#303030;font-weight:normal;font-style:normal;transform:scaleY(1.06);transform-origin:0 13.3px;">THERMIK</div>
<div class="t" style="right:97px;top:616.30px;font-size:14.5px;line-height:16.66px;color:#303030;font-weight:normal;font-style:normal;transform:scaleY(1.06);transform-origin:0 13.3px;">1</div>
<div class="t" style="right:0px;top:616.30px;font-size:14.5px;line-height:16.66px;color:#303030;font-weight:normal;font-style:normal;transform:scaleY(1.06);transform-origin:0 13.3px;">1</div>
<div style="left:59px;top:634.1px;width:15px;height:15px;border:1px solid #6c6c6c;background:#fbfcfd"></div>
<div class="t" style="left:98.5px;top:635.23px;font-size:14.5px;line-height:16.66px;color:#303030;font-weight:normal;font-style:normal;transform:scaleY(1.06);transform-origin:0 13.3px;">CMFA2Z230SH05</div>
<div class="t" style="left:229.5px;top:635.23px;font-size:14.5px;line-height:16.66px;color:#303030;font-weight:normal;font-style:normal;transform:scaleY(1.06);transform-origin:0 13.3px;">MODULE FRIGO AQUA 2 Z 230V</div>
<div class="t" style="left:572px;top:635.23px;font-size:14.5px;line-height:16.66px;color:#303030;font-weight:normal;font-style:normal;transform:scaleY(1.06);transform-origin:0 13.3px;">Etude</div>
<div class="t" style="left:761px;top:635.23px;font-size:14.5px;line-height:16.66px;color:#303030;font-weight:normal;font-style:normal;transform:scaleY(1.06);transform-origin:0 13.3px;">C13-1286</div>
<div class="t" style="left:849px;top:635.23px;font-size:14.5px;line-height:16.66px;color:#303030;font-weight:normal;font-style:normal;transform:scaleY(1.06);transform-origin:0 13.3px;">THERMIK</div>
<div class="t" style="left:1019px;top:635.23px;font-size:14.5px;line-height:16.66px;color:#303030;font-weight:normal;font-style:normal;transform:scaleY(1.06);transform-origin:0 13.3px;">E111068</div>
<div class="t" style="right:0px;top:635.23px;font-size:14.5px;line-height:16.66px;color:#303030;font-weight:normal;font-style:normal;transform:scaleY(1.06);transform-origin:0 13.3px;">1</div>
<div style="left:59px;top:653.1px;width:15px;height:15px;border:1px solid #6c6c6c;background:#fbfcfd"></div>
<div class="t" style="left:98.5px;top:654.16px;font-size:14.5px;line-height:16.66px;color:#303030;font-weight:normal;font-style:normal;transform:scaleY(1.06);transform-origin:0 13.3px;">piecemodele</div>
<div class="t" style="left:229.5px;top:654.16px;font-size:14.5px;line-height:16.66px;color:#303030;font-weight:normal;font-style:normal;transform:scaleY(1.06);transform-origin:0 13.3px;">connecteur</div>
<div class="t" style="left:572px;top:654.16px;font-size:14.5px;line-height:16.66px;color:#303030;font-weight:normal;font-style:normal;transform:scaleY(1.06);transform-origin:0 13.3px;">Cde client</div>
<div class="t" style="left:671px;top:654.16px;font-size:14.5px;line-height:16.66px;color:#303030;font-weight:normal;font-style:normal;transform:scaleY(1.06);transform-origin:0 13.3px;">7895323</div>
<div class="t" style="left:761px;top:654.16px;font-size:14.5px;line-height:16.66px;color:#303030;font-weight:normal;font-style:normal;transform:scaleY(1.06);transform-origin:0 13.3px;">C13-1296</div>
<div class="t" style="left:849px;top:654.16px;font-size:14.5px;line-height:16.66px;color:#303030;font-weight:normal;font-style:normal;transform:scaleY(1.06);transform-origin:0 13.3px;">THERMIK</div>
<div class="t" style="right:97px;top:654.16px;font-size:14.5px;line-height:16.66px;color:#303030;font-weight:normal;font-style:normal;transform:scaleY(1.06);transform-origin:0 13.3px;">20</div>
<div class="t" style="right:0px;top:654.16px;font-size:14.5px;line-height:16.66px;color:#303030;font-weight:normal;font-style:normal;transform:scaleY(1.06);transform-origin:0 13.3px;">20</div>
<div style="left:59px;top:672.0px;width:15px;height:15px;border:1px solid #6c6c6c;background:#fbfcfd"></div>
<div class="t" style="left:98.5px;top:673.09px;font-size:14.5px;line-height:16.66px;color:#303030;font-weight:normal;font-style:normal;transform:scaleY(1.06);transform-origin:0 13.3px;">1425-TYU-25</div>
<div class="t" style="left:229.5px;top:673.09px;font-size:14.5px;line-height:16.66px;color:#303030;font-weight:normal;font-style:normal;transform:scaleY(1.06);transform-origin:0 13.3px;">Poteaux IPE240 assemblage n°3</div>
<div class="t" style="left:572px;top:673.09px;font-size:14.5px;line-height:16.66px;color:#303030;font-weight:normal;font-style:normal;transform:scaleY(1.06);transform-origin:0 13.3px;">Cde client</div>
<div class="t" style="left:671px;top:673.09px;font-size:14.5px;line-height:16.66px;color:#303030;font-weight:normal;font-style:normal;transform:scaleY(1.06);transform-origin:0 13.3px;">1425-TYU-25</div>
<div class="t" style="left:761px;top:673.09px;font-size:14.5px;line-height:16.66px;color:#303030;font-weight:normal;font-style:normal;transform:scaleY(1.06);transform-origin:0 13.3px;">C13-1322</div>
<div class="t" style="left:849px;top:673.09px;font-size:14.5px;line-height:16.66px;color:#303030;font-weight:normal;font-style:normal;transform:scaleY(1.06);transform-origin:0 13.3px;">THERMIK</div>
<div class="t" style="right:97px;top:673.09px;font-size:14.5px;line-height:16.66px;color:#303030;font-weight:normal;font-style:normal;transform:scaleY(1.06);transform-origin:0 13.3px;">1</div>
<div class="t" style="right:0px;top:673.09px;font-size:14.5px;line-height:16.66px;color:#303030;font-weight:normal;font-style:normal;transform:scaleY(1.06);transform-origin:0 13.3px;">1</div></body></html>
